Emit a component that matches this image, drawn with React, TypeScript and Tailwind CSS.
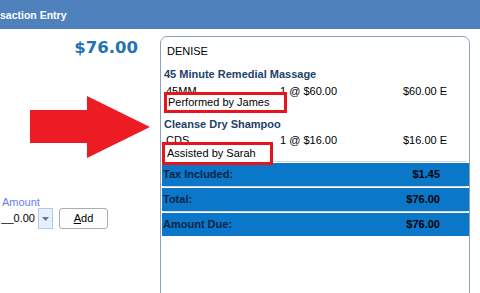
const items = [
  { name: "45 Minute Remedial Massage", code: "45MM", qty: "1 @ $60.00", amount: "$60.00 E", note: "Performed by James" },
  { name: "Cleanse Dry Shampoo", code: "CDS", qty: "1 @ $16.00", amount: "$16.00 E", note: "Assisted by Sarah" },
];

const totals = [
  { label: "Tax Included:", value: "$1.45" },
  { label: "Total:", value: "$76.00" },
  { label: "Amount Due:", value: "$76.00" },
];

function Arrow() {
  return (
    <svg width="122" height="64" viewBox="0 0 122 64" className="block">
      <polygon points="1,15 58,15 58,1 121,32 58,63 58,48 1,48" fill="#ed1c24" />
    </svg>
  );
}

export default function App() {
  return (
    <div className="h-[293px] w-[480px] overflow-hidden bg-white font-['Liberation_Sans',Arial,sans-serif] text-[11px] leading-[13px] text-black">
      <header className="h-[29px] bg-[#4f81bd] pt-[9px] text-[10.5px] font-bold leading-[13px] text-white">
        saction Entry
      </header>

      <div className="flex">
        <div className="w-[160px] shrink-0">
          <div className="mt-[9px] pr-[22px] text-right font-['DejaVu_Sans',Verdana,sans-serif] text-[16.5px] font-bold leading-[20px] text-[#1f72b8]">
            $76.00
          </div>
          <div className="ml-[29px] mt-[37px]">
            <Arrow />
          </div>
          <div className="mt-[37px] pl-[2px] text-[#6a7cf5]">Amount</div>
          <div className="-mt-px flex h-[21px] items-stretch">
            <div className="w-[38px] pr-[3px] text-right leading-[21px]">__0.00</div>
            <div className="flex w-[15px] items-center justify-center border border-[#b3c9e8] bg-[#e6effb]">
              <svg width="7" height="4" viewBox="0 0 7 4">
                <polygon points="0,0 7,0 3.5,4" fill="#5b79a6" />
              </svg>
            </div>
            <button className="ml-[6px] w-[49px] rounded-[3px] border border-[#adadad] bg-[#fdfdfd] text-[11px] leading-[19px]">
              <span className="underline">A</span>dd
            </button>
          </div>
        </div>

        <section className="mt-[7px] h-[270px] w-[310px] shrink-0 rounded-t-[7px] border border-[#8aa3c2]">
          <div className="pl-[6px] pt-[8px]">DENISE</div>

          {items.map((item, i) => (
            <div key={item.code} className={i === 0 ? "mt-[10px]" : "mt-[5px]"}>
              <div className="pl-[3px] font-bold text-[#223f6a]">{item.name}</div>
              <div className={`${i === 0 ? "mt-[4px]" : "mt-[3px]"} grid grid-cols-[114px_123px_1fr] pl-[5px]`}>
                <span>{item.code}</span>
                <span>{item.qty}</span>
                <span>{item.amount}</span>
              </div>
              {i === 0 ? (
                <div className="relative z-10 -mt-[6px] ml-[3px] h-[21px] w-[123px] border-[3px] border-[#e8141c] bg-white pl-[1px] leading-[15px]">
                  {item.note}
                </div>
              ) : (
                <div className="relative z-10 -mt-[5px] ml-[1px] h-[23px] w-[111px] border-[3px] border-[#e8141c] bg-white pl-[2px] leading-[17px]">
                  {item.note}
                </div>
              )}
            </div>
          ))}

          <div className="relative -mt-[4px] mx-[3px] h-px bg-[#d6d6d6]" />
          <div className="mt-[1px]">
            {totals.map((t, i) => (
              <div key={t.label}>
                {i > 0 && <div className="mx-[3px] h-[2px] border-t border-[#d8d8d8] bg-white" />}
                <div className="ml-[1px] flex h-[23px] items-center justify-between bg-[#0a77c9] pl-[1px] pr-[29px] font-bold">
                  <span className="text-[#0d2445]">{t.label}</span>
                  <span className="text-black">{t.value}</span>
                </div>
              </div>
            ))}
          </div>
        </section>
      </div>
    </div>
  );
}
